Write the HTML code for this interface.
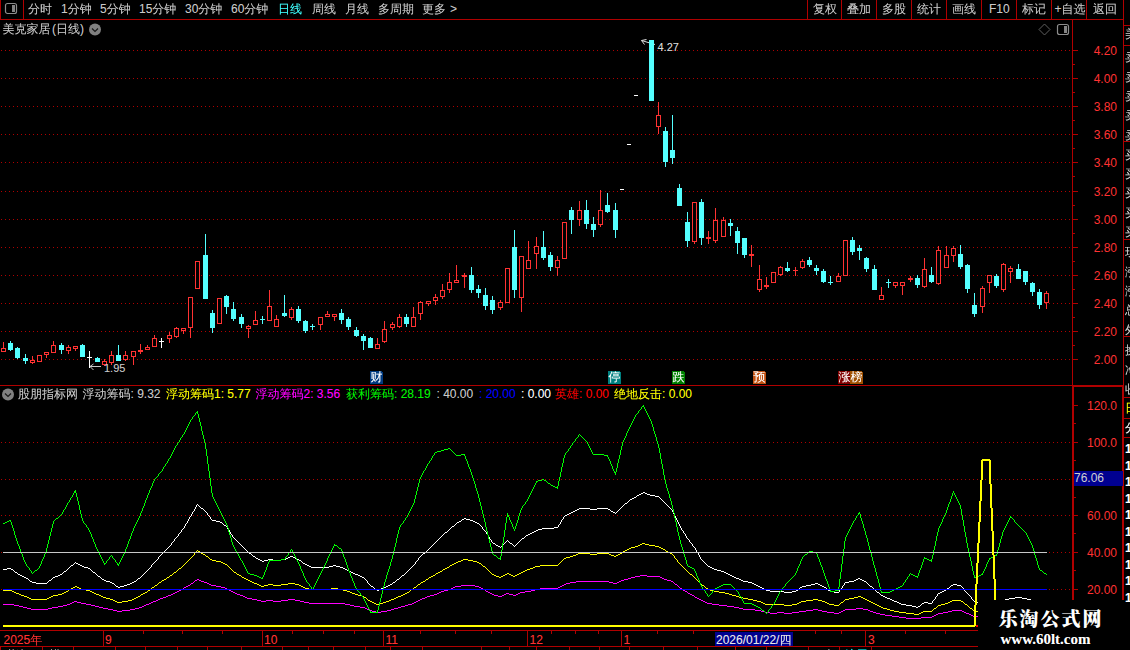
<!DOCTYPE html>
<html><head><meta charset="utf-8"><title>chart</title>
<style>
html,body{margin:0;padding:0;background:#000;overflow:hidden}
body{width:1130px;height:650px;position:relative;font:12px/14px "Liberation Sans","WenQuanYi Zen Hei",sans-serif;color:#c8c8c8}
svg{position:absolute;left:0;top:0}
.t{position:absolute;white-space:nowrap;line-height:14px;height:14px;text-shadow:0 0 0 color-mix(in srgb,currentColor 30%,transparent)}
.r{text-align:right;text-shadow:none}
#wrap{position:absolute;left:0;top:0;width:1130px;height:650px;overflow:hidden}
</style></head><body><div id="wrap">
<svg width="1130" height="650" viewBox="0 0 1130 650" shape-rendering="crispEdges">
<rect x="0" y="0" width="1" height="20" fill="#b00000"/>
<rect x="0" y="19" width="1124" height="1" fill="#b00000"/>
<rect x="23" y="0" width="1" height="20" fill="#b00000"/>
<rect x="807" y="0" width="1" height="20" fill="#b00000"/>
<rect x="841" y="0" width="1" height="20" fill="#b00000"/>
<rect x="876" y="0" width="1" height="20" fill="#b00000"/>
<rect x="911" y="0" width="1" height="20" fill="#b00000"/>
<rect x="946" y="0" width="1" height="20" fill="#b00000"/>
<rect x="981" y="0" width="1" height="20" fill="#b00000"/>
<rect x="1016" y="0" width="1" height="20" fill="#b00000"/>
<rect x="1051" y="0" width="1" height="20" fill="#b00000"/>
<rect x="1086" y="0" width="1" height="20" fill="#b00000"/>
<rect x="1123" y="0" width="1" height="385" fill="#b00000"/>
<rect x="5.5" y="3.5" width="11" height="10" rx="2" ry="2" fill="none" stroke="#8c8c8c" stroke-width="1.2" shape-rendering="auto"/>
<rect x="12" y="5" width="3" height="7" fill="#848484"/>
<line x1="1" y1="50.5" x2="1072" y2="50.5" stroke="#b00000" stroke-width="1" stroke-dasharray="1 3"/>
<line x1="1" y1="78.5" x2="1072" y2="78.5" stroke="#b00000" stroke-width="1" stroke-dasharray="1 3"/>
<line x1="1" y1="106.5" x2="1072" y2="106.5" stroke="#b00000" stroke-width="1" stroke-dasharray="1 3"/>
<line x1="1" y1="134.5" x2="1072" y2="134.5" stroke="#b00000" stroke-width="1" stroke-dasharray="1 3"/>
<line x1="1" y1="162.5" x2="1072" y2="162.5" stroke="#b00000" stroke-width="1" stroke-dasharray="1 3"/>
<line x1="1" y1="191.5" x2="1072" y2="191.5" stroke="#b00000" stroke-width="1" stroke-dasharray="1 3"/>
<line x1="1" y1="219.5" x2="1072" y2="219.5" stroke="#b00000" stroke-width="1" stroke-dasharray="1 3"/>
<line x1="1" y1="247.5" x2="1072" y2="247.5" stroke="#b00000" stroke-width="1" stroke-dasharray="1 3"/>
<line x1="1" y1="275.5" x2="1072" y2="275.5" stroke="#b00000" stroke-width="1" stroke-dasharray="1 3"/>
<line x1="1" y1="303.5" x2="1072" y2="303.5" stroke="#b00000" stroke-width="1" stroke-dasharray="1 3"/>
<line x1="1" y1="331.5" x2="1072" y2="331.5" stroke="#b00000" stroke-width="1" stroke-dasharray="1 3"/>
<line x1="1" y1="359.5" x2="1072" y2="359.5" stroke="#b00000" stroke-width="1" stroke-dasharray="1 3"/>
<rect x="1072" y="20" width="1" height="365" fill="#b00000"/>
<rect x="1073" y="50" width="5" height="1" fill="#b00000"/>
<rect x="1073" y="64" width="2" height="1" fill="#b00000"/>
<rect x="1073" y="78" width="5" height="1" fill="#b00000"/>
<rect x="1073" y="92" width="2" height="1" fill="#b00000"/>
<rect x="1073" y="106" width="5" height="1" fill="#b00000"/>
<rect x="1073" y="120" width="2" height="1" fill="#b00000"/>
<rect x="1073" y="134" width="5" height="1" fill="#b00000"/>
<rect x="1073" y="148" width="2" height="1" fill="#b00000"/>
<rect x="1073" y="162" width="5" height="1" fill="#b00000"/>
<rect x="1073" y="176" width="2" height="1" fill="#b00000"/>
<rect x="1073" y="191" width="5" height="1" fill="#b00000"/>
<rect x="1073" y="205" width="2" height="1" fill="#b00000"/>
<rect x="1073" y="219" width="5" height="1" fill="#b00000"/>
<rect x="1073" y="233" width="2" height="1" fill="#b00000"/>
<rect x="1073" y="247" width="5" height="1" fill="#b00000"/>
<rect x="1073" y="261" width="2" height="1" fill="#b00000"/>
<rect x="1073" y="275" width="5" height="1" fill="#b00000"/>
<rect x="1073" y="289" width="2" height="1" fill="#b00000"/>
<rect x="1073" y="303" width="5" height="1" fill="#b00000"/>
<rect x="1073" y="317" width="2" height="1" fill="#b00000"/>
<rect x="1073" y="331" width="5" height="1" fill="#b00000"/>
<rect x="1073" y="345" width="2" height="1" fill="#b00000"/>
<rect x="1073" y="359" width="5" height="1" fill="#b00000"/>
<path d="M1044.5 24 L1050 29.5 L1044.5 35 L1039 29.5 Z" fill="none" stroke="#606060" stroke-width="1" shape-rendering="auto"/>
<rect x="1057.5" y="24.5" width="11" height="10" rx="2" ry="2" fill="none" stroke="#8c8c8c" stroke-width="1.2" shape-rendering="auto"/>
<rect x="1064" y="26" width="3" height="7" fill="#848484"/>
<rect x="0" y="385" width="1072" height="1" fill="#b00000"/>
<rect x="1072" y="385" width="52" height="2" fill="#b00000"/>
<path d="M89.5 366.5 H101 M90 366.5 l3.5 -2.5 M90 366.5 l3.5 3.5" stroke="#c8c8c8" stroke-width="1" fill="none" shape-rendering="auto"/>
<path d="M641.5 40.5 L655 44.5 M641.5 40.5 l5 -1 M641.5 40.5 l3 4" stroke="#e0e0e0" stroke-width="1" fill="none" shape-rendering="auto"/>
<rect x="3" y="342" width="1" height="6" fill="#ff3232"/>
<rect x="1.5" y="348.5" width="4" height="3" fill="#000" stroke="#ff3232" stroke-width="1"/>
<rect x="10" y="341" width="1" height="10" fill="#54ffff"/>
<rect x="8" y="343" width="5" height="7" fill="#54ffff"/>
<rect x="17" y="347" width="1" height="12" fill="#54ffff"/>
<rect x="15" y="348" width="5" height="10" fill="#54ffff"/>
<rect x="25" y="354" width="1" height="10" fill="#54ffff"/>
<rect x="23" y="358" width="5" height="3" fill="#54ffff"/>
<rect x="32" y="356" width="1" height="4" fill="#ff3232"/>
<rect x="32" y="362" width="1" height="2" fill="#ff3232"/>
<rect x="30.5" y="360.5" width="4" height="2" fill="#000" stroke="#ff3232" stroke-width="1"/>
<rect x="37.5" y="355.5" width="4" height="6" fill="#000" stroke="#ff3232" stroke-width="1"/>
<rect x="46" y="355" width="1" height="3" fill="#ff3232"/>
<rect x="44.5" y="352.5" width="4" height="2" fill="#000" stroke="#ff3232" stroke-width="1"/>
<rect x="53" y="341" width="1" height="4" fill="#ff3232"/>
<rect x="51.5" y="345.5" width="4" height="7" fill="#000" stroke="#ff3232" stroke-width="1"/>
<rect x="61" y="343" width="1" height="11" fill="#54ffff"/>
<rect x="59" y="345" width="5" height="5" fill="#54ffff"/>
<rect x="68" y="345" width="1" height="2" fill="#ff3232"/>
<rect x="68" y="351" width="1" height="3" fill="#ff3232"/>
<rect x="66.5" y="347.5" width="4" height="3" fill="#000" stroke="#ff3232" stroke-width="1"/>
<rect x="75" y="348" width="1" height="3" fill="#ff3232"/>
<rect x="73.5" y="346.5" width="4" height="2" fill="#000" stroke="#ff3232" stroke-width="1"/>
<rect x="82" y="344" width="1" height="13" fill="#54ffff"/>
<rect x="80" y="345" width="5" height="12" fill="#54ffff"/>
<rect x="89" y="351" width="1" height="17" fill="#ffffff"/>
<rect x="87" y="357" width="5" height="1" fill="#ffffff"/>
<rect x="97" y="357" width="1" height="5" fill="#54ffff"/>
<rect x="95" y="358" width="5" height="4" fill="#54ffff"/>
<rect x="104" y="359" width="1" height="2" fill="#ff3232"/>
<rect x="104" y="365" width="1" height="1" fill="#ff3232"/>
<rect x="102.5" y="361.5" width="4" height="3" fill="#000" stroke="#ff3232" stroke-width="1"/>
<rect x="111" y="351" width="1" height="4" fill="#ff3232"/>
<rect x="111" y="363" width="1" height="2" fill="#ff3232"/>
<rect x="109.5" y="355.5" width="4" height="7" fill="#000" stroke="#ff3232" stroke-width="1"/>
<rect x="118" y="345" width="1" height="16" fill="#54ffff"/>
<rect x="116" y="355" width="5" height="6" fill="#54ffff"/>
<rect x="125" y="351" width="1" height="4" fill="#ff3232"/>
<rect x="125" y="360" width="1" height="1" fill="#ff3232"/>
<rect x="123.5" y="355.5" width="4" height="4" fill="#000" stroke="#ff3232" stroke-width="1"/>
<rect x="133" y="357" width="1" height="8" fill="#ff3232"/>
<rect x="131.5" y="351.5" width="4" height="5" fill="#000" stroke="#ff3232" stroke-width="1"/>
<rect x="140" y="344" width="1" height="10" fill="#ff3232"/>
<rect x="138" y="350" width="5" height="2" fill="#ff3232"/>
<rect x="147" y="345" width="1" height="2" fill="#ff3232"/>
<rect x="145.5" y="347.5" width="4" height="2" fill="#000" stroke="#ff3232" stroke-width="1"/>
<rect x="154" y="335" width="1" height="3" fill="#ff3232"/>
<rect x="152.5" y="338.5" width="4" height="8" fill="#000" stroke="#ff3232" stroke-width="1"/>
<rect x="161" y="338" width="1" height="10" fill="#ffffff"/>
<rect x="159" y="341" width="5" height="1" fill="#ffffff"/>
<rect x="169" y="332" width="1" height="3" fill="#ff3232"/>
<rect x="169" y="339" width="1" height="4" fill="#ff3232"/>
<rect x="167.5" y="335.5" width="4" height="3" fill="#000" stroke="#ff3232" stroke-width="1"/>
<rect x="176" y="327" width="1" height="1" fill="#ff3232"/>
<rect x="176" y="337" width="1" height="1" fill="#ff3232"/>
<rect x="174.5" y="328.5" width="4" height="8" fill="#000" stroke="#ff3232" stroke-width="1"/>
<rect x="183" y="330" width="1" height="4" fill="#ff3232"/>
<rect x="181.5" y="328.5" width="4" height="2" fill="#000" stroke="#ff3232" stroke-width="1"/>
<rect x="190" y="328" width="1" height="10" fill="#ff3232"/>
<rect x="188.5" y="297.5" width="4" height="30" fill="#000" stroke="#ff3232" stroke-width="1"/>
<rect x="195.5" y="261.5" width="4" height="27" fill="#000" stroke="#ff3232" stroke-width="1"/>
<rect x="205" y="234" width="1" height="65" fill="#54ffff"/>
<rect x="203" y="255" width="5" height="44" fill="#54ffff"/>
<rect x="212" y="310" width="1" height="23" fill="#54ffff"/>
<rect x="210" y="313" width="5" height="15" fill="#54ffff"/>
<rect x="217.5" y="298.5" width="4" height="25" fill="#000" stroke="#ff3232" stroke-width="1"/>
<rect x="226" y="295" width="1" height="19" fill="#54ffff"/>
<rect x="224" y="296" width="5" height="11" fill="#54ffff"/>
<rect x="233" y="302" width="1" height="19" fill="#54ffff"/>
<rect x="231" y="309" width="5" height="10" fill="#54ffff"/>
<rect x="241" y="314" width="1" height="14" fill="#54ffff"/>
<rect x="239" y="317" width="5" height="7" fill="#54ffff"/>
<rect x="248" y="325" width="1" height="1" fill="#ff3232"/>
<rect x="248" y="329" width="1" height="9" fill="#ff3232"/>
<rect x="246.5" y="326.5" width="4" height="2" fill="#000" stroke="#ff3232" stroke-width="1"/>
<rect x="255" y="311" width="1" height="9" fill="#ff3232"/>
<rect x="253.5" y="320.5" width="4" height="4" fill="#000" stroke="#ff3232" stroke-width="1"/>
<rect x="262" y="316" width="1" height="8" fill="#54ffff"/>
<rect x="260" y="319" width="5" height="1" fill="#54ffff"/>
<rect x="269" y="290" width="1" height="16" fill="#ff3232"/>
<rect x="267.5" y="306.5" width="4" height="14" fill="#000" stroke="#ff3232" stroke-width="1"/>
<rect x="276" y="315" width="1" height="4" fill="#ff3232"/>
<rect x="274.5" y="319.5" width="4" height="7" fill="#000" stroke="#ff3232" stroke-width="1"/>
<rect x="284" y="295" width="1" height="22" fill="#54ffff"/>
<rect x="282" y="313" width="5" height="3" fill="#54ffff"/>
<rect x="291" y="307" width="1" height="2" fill="#ff3232"/>
<rect x="291" y="318" width="1" height="2" fill="#ff3232"/>
<rect x="289.5" y="309.5" width="4" height="8" fill="#000" stroke="#ff3232" stroke-width="1"/>
<rect x="298" y="306" width="1" height="17" fill="#54ffff"/>
<rect x="296" y="309" width="5" height="12" fill="#54ffff"/>
<rect x="305" y="320" width="1" height="13" fill="#54ffff"/>
<rect x="303" y="321" width="5" height="10" fill="#54ffff"/>
<rect x="312" y="324" width="1" height="6" fill="#54ffff"/>
<rect x="310" y="326" width="5" height="1" fill="#54ffff"/>
<rect x="320" y="325" width="1" height="5" fill="#ff3232"/>
<rect x="318.5" y="317.5" width="4" height="7" fill="#000" stroke="#ff3232" stroke-width="1"/>
<rect x="327" y="311" width="1" height="3" fill="#ff3232"/>
<rect x="325.5" y="314.5" width="4" height="2" fill="#000" stroke="#ff3232" stroke-width="1"/>
<rect x="334" y="317" width="1" height="4" fill="#ff3232"/>
<rect x="332.5" y="314.5" width="4" height="2" fill="#000" stroke="#ff3232" stroke-width="1"/>
<rect x="341" y="309" width="1" height="15" fill="#54ffff"/>
<rect x="339" y="313" width="5" height="7" fill="#54ffff"/>
<rect x="348" y="317" width="1" height="13" fill="#54ffff"/>
<rect x="346" y="319" width="5" height="8" fill="#54ffff"/>
<rect x="356" y="327" width="1" height="10" fill="#54ffff"/>
<rect x="354" y="330" width="5" height="6" fill="#54ffff"/>
<rect x="363" y="334" width="1" height="16" fill="#54ffff"/>
<rect x="361" y="336" width="5" height="5" fill="#54ffff"/>
<rect x="370" y="337" width="1" height="11" fill="#54ffff"/>
<rect x="368" y="338" width="5" height="10" fill="#54ffff"/>
<rect x="377" y="338" width="1" height="6" fill="#ff3232"/>
<rect x="375.5" y="344.5" width="4" height="4" fill="#000" stroke="#ff3232" stroke-width="1"/>
<rect x="384" y="321" width="1" height="8" fill="#ff3232"/>
<rect x="384" y="342" width="1" height="1" fill="#ff3232"/>
<rect x="382.5" y="329.5" width="4" height="12" fill="#000" stroke="#ff3232" stroke-width="1"/>
<rect x="392" y="322" width="1" height="2" fill="#ff3232"/>
<rect x="392" y="328" width="1" height="2" fill="#ff3232"/>
<rect x="390.5" y="324.5" width="4" height="3" fill="#000" stroke="#ff3232" stroke-width="1"/>
<rect x="399" y="314" width="1" height="3" fill="#ff3232"/>
<rect x="399" y="327" width="1" height="1" fill="#ff3232"/>
<rect x="397.5" y="317.5" width="4" height="9" fill="#000" stroke="#ff3232" stroke-width="1"/>
<rect x="406" y="314" width="1" height="13" fill="#54ffff"/>
<rect x="404" y="317" width="5" height="7" fill="#54ffff"/>
<rect x="413" y="307" width="1" height="10" fill="#ff3232"/>
<rect x="411.5" y="317.5" width="4" height="9" fill="#000" stroke="#ff3232" stroke-width="1"/>
<rect x="420" y="301" width="1" height="1" fill="#ff3232"/>
<rect x="420" y="314" width="1" height="6" fill="#ff3232"/>
<rect x="418.5" y="302.5" width="4" height="11" fill="#000" stroke="#ff3232" stroke-width="1"/>
<rect x="428" y="303" width="1" height="3" fill="#ff3232"/>
<rect x="426.5" y="301.5" width="4" height="2" fill="#000" stroke="#ff3232" stroke-width="1"/>
<rect x="435" y="294" width="1" height="3" fill="#ff3232"/>
<rect x="435" y="301" width="1" height="4" fill="#ff3232"/>
<rect x="433.5" y="297.5" width="4" height="3" fill="#000" stroke="#ff3232" stroke-width="1"/>
<rect x="442" y="284" width="1" height="6" fill="#ff3232"/>
<rect x="442" y="297" width="1" height="2" fill="#ff3232"/>
<rect x="440.5" y="290.5" width="4" height="6" fill="#000" stroke="#ff3232" stroke-width="1"/>
<rect x="449" y="273" width="1" height="9" fill="#ff3232"/>
<rect x="449" y="290" width="1" height="3" fill="#ff3232"/>
<rect x="447.5" y="282.5" width="4" height="7" fill="#000" stroke="#ff3232" stroke-width="1"/>
<rect x="456" y="265" width="1" height="15" fill="#ff3232"/>
<rect x="454.5" y="280.5" width="4" height="2" fill="#000" stroke="#ff3232" stroke-width="1"/>
<rect x="464" y="273" width="1" height="15" fill="#ff3232"/>
<rect x="462" y="275" width="5" height="2" fill="#ff3232"/>
<rect x="471" y="267" width="1" height="26" fill="#54ffff"/>
<rect x="469" y="275" width="5" height="15" fill="#54ffff"/>
<rect x="478" y="285" width="1" height="13" fill="#54ffff"/>
<rect x="476" y="289" width="5" height="4" fill="#54ffff"/>
<rect x="485" y="288" width="1" height="22" fill="#54ffff"/>
<rect x="483" y="295" width="5" height="11" fill="#54ffff"/>
<rect x="492" y="296" width="1" height="18" fill="#54ffff"/>
<rect x="490" y="300" width="5" height="10" fill="#54ffff"/>
<rect x="500" y="300" width="1" height="2" fill="#ff3232"/>
<rect x="500" y="308" width="1" height="2" fill="#ff3232"/>
<rect x="498.5" y="302.5" width="4" height="5" fill="#000" stroke="#ff3232" stroke-width="1"/>
<rect x="505.5" y="268.5" width="4" height="34" fill="#000" stroke="#ff3232" stroke-width="1"/>
<rect x="514" y="230" width="1" height="68" fill="#54ffff"/>
<rect x="512" y="247" width="5" height="43" fill="#54ffff"/>
<rect x="521" y="298" width="1" height="14" fill="#ff3232"/>
<rect x="519.5" y="256.5" width="4" height="41" fill="#000" stroke="#ff3232" stroke-width="1"/>
<rect x="528" y="241" width="1" height="19" fill="#ff3232"/>
<rect x="526.5" y="260.5" width="4" height="8" fill="#000" stroke="#ff3232" stroke-width="1"/>
<rect x="536" y="237" width="1" height="9" fill="#ff3232"/>
<rect x="536" y="254" width="1" height="15" fill="#ff3232"/>
<rect x="534.5" y="246.5" width="4" height="7" fill="#000" stroke="#ff3232" stroke-width="1"/>
<rect x="543" y="231" width="1" height="29" fill="#54ffff"/>
<rect x="541" y="247" width="5" height="11" fill="#54ffff"/>
<rect x="550" y="252" width="1" height="19" fill="#54ffff"/>
<rect x="548" y="255" width="5" height="12" fill="#54ffff"/>
<rect x="557" y="256" width="1" height="4" fill="#ff3232"/>
<rect x="557" y="268" width="1" height="8" fill="#ff3232"/>
<rect x="555.5" y="260.5" width="4" height="7" fill="#000" stroke="#ff3232" stroke-width="1"/>
<rect x="562.5" y="222.5" width="4" height="36" fill="#000" stroke="#ff3232" stroke-width="1"/>
<rect x="571" y="207" width="1" height="27" fill="#54ffff"/>
<rect x="569" y="210" width="5" height="10" fill="#54ffff"/>
<rect x="579" y="201" width="1" height="9" fill="#ff3232"/>
<rect x="579" y="220" width="1" height="6" fill="#ff3232"/>
<rect x="577.5" y="210.5" width="4" height="9" fill="#000" stroke="#ff3232" stroke-width="1"/>
<rect x="586" y="200" width="1" height="29" fill="#54ffff"/>
<rect x="584" y="210" width="5" height="14" fill="#54ffff"/>
<rect x="593" y="217" width="1" height="20" fill="#54ffff"/>
<rect x="591" y="224" width="5" height="6" fill="#54ffff"/>
<rect x="600" y="190" width="1" height="20" fill="#ff3232"/>
<rect x="600" y="225" width="1" height="2" fill="#ff3232"/>
<rect x="598.5" y="210.5" width="4" height="14" fill="#000" stroke="#ff3232" stroke-width="1"/>
<rect x="607" y="193" width="1" height="20" fill="#54ffff"/>
<rect x="605" y="205" width="5" height="7" fill="#54ffff"/>
<rect x="615" y="203" width="1" height="35" fill="#54ffff"/>
<rect x="613" y="210" width="5" height="20" fill="#54ffff"/>
<rect x="620" y="189" width="4" height="1" fill="#ffffff"/>
<rect x="627" y="144" width="4" height="1" fill="#ffffff"/>
<rect x="634" y="95" width="4" height="1" fill="#ffffff"/>
<rect x="651" y="40" width="1" height="61" fill="#54ffff"/>
<rect x="649" y="40" width="5" height="61" fill="#54ffff"/>
<rect x="658" y="102" width="1" height="13" fill="#ff3232"/>
<rect x="658" y="127" width="1" height="7" fill="#ff3232"/>
<rect x="656.5" y="115.5" width="4" height="11" fill="#000" stroke="#ff3232" stroke-width="1"/>
<rect x="665" y="127" width="1" height="40" fill="#54ffff"/>
<rect x="663" y="131" width="5" height="31" fill="#54ffff"/>
<rect x="672" y="115" width="1" height="49" fill="#54ffff"/>
<rect x="670" y="150" width="5" height="8" fill="#54ffff"/>
<rect x="679" y="184" width="1" height="22" fill="#54ffff"/>
<rect x="677" y="188" width="5" height="18" fill="#54ffff"/>
<rect x="687" y="212" width="1" height="35" fill="#54ffff"/>
<rect x="685" y="222" width="5" height="19" fill="#54ffff"/>
<rect x="694" y="242" width="1" height="2" fill="#ff3232"/>
<rect x="692.5" y="202.5" width="4" height="39" fill="#000" stroke="#ff3232" stroke-width="1"/>
<rect x="701" y="199" width="1" height="46" fill="#54ffff"/>
<rect x="699" y="202" width="5" height="36" fill="#54ffff"/>
<rect x="708" y="231" width="1" height="13" fill="#ff3232"/>
<rect x="706" y="237" width="5" height="2" fill="#ff3232"/>
<rect x="715" y="208" width="1" height="12" fill="#ff3232"/>
<rect x="715" y="241" width="1" height="2" fill="#ff3232"/>
<rect x="713.5" y="220.5" width="4" height="20" fill="#000" stroke="#ff3232" stroke-width="1"/>
<rect x="723" y="217" width="1" height="3" fill="#ff3232"/>
<rect x="721.5" y="220.5" width="4" height="16" fill="#000" stroke="#ff3232" stroke-width="1"/>
<rect x="730" y="219" width="1" height="17" fill="#54ffff"/>
<rect x="728" y="223" width="5" height="3" fill="#54ffff"/>
<rect x="737" y="227" width="1" height="27" fill="#54ffff"/>
<rect x="735" y="231" width="5" height="12" fill="#54ffff"/>
<rect x="744" y="238" width="1" height="20" fill="#54ffff"/>
<rect x="742" y="238" width="5" height="17" fill="#54ffff"/>
<rect x="751" y="245" width="1" height="22" fill="#ff3232"/>
<rect x="749" y="254" width="5" height="2" fill="#ff3232"/>
<rect x="759" y="265" width="1" height="14" fill="#ff3232"/>
<rect x="759" y="290" width="1" height="2" fill="#ff3232"/>
<rect x="757.5" y="279.5" width="4" height="10" fill="#000" stroke="#ff3232" stroke-width="1"/>
<rect x="766" y="277" width="1" height="12" fill="#ff3232"/>
<rect x="764" y="285" width="5" height="2" fill="#ff3232"/>
<rect x="771.5" y="272.5" width="4" height="10" fill="#000" stroke="#ff3232" stroke-width="1"/>
<rect x="780" y="266" width="1" height="1" fill="#ff3232"/>
<rect x="780" y="275" width="1" height="1" fill="#ff3232"/>
<rect x="778.5" y="267.5" width="4" height="7" fill="#000" stroke="#ff3232" stroke-width="1"/>
<rect x="787" y="262" width="1" height="10" fill="#54ffff"/>
<rect x="785" y="268" width="5" height="3" fill="#54ffff"/>
<rect x="795" y="267" width="1" height="3" fill="#ff3232"/>
<rect x="795" y="271" width="1" height="5" fill="#ff3232"/>
<rect x="793" y="270" width="5" height="1" fill="#ff3232"/>
<rect x="802" y="259" width="1" height="2" fill="#ff3232"/>
<rect x="802" y="268" width="1" height="1" fill="#ff3232"/>
<rect x="800.5" y="261.5" width="4" height="6" fill="#000" stroke="#ff3232" stroke-width="1"/>
<rect x="809" y="257" width="1" height="10" fill="#54ffff"/>
<rect x="807" y="260" width="5" height="5" fill="#54ffff"/>
<rect x="816" y="265" width="1" height="10" fill="#54ffff"/>
<rect x="814" y="268" width="5" height="3" fill="#54ffff"/>
<rect x="823" y="269" width="1" height="14" fill="#54ffff"/>
<rect x="821" y="271" width="5" height="11" fill="#54ffff"/>
<rect x="830" y="276" width="1" height="9" fill="#54ffff"/>
<rect x="828" y="282" width="5" height="1" fill="#54ffff"/>
<rect x="838" y="273" width="1" height="3" fill="#ff3232"/>
<rect x="836.5" y="276.5" width="4" height="5" fill="#000" stroke="#ff3232" stroke-width="1"/>
<rect x="843.5" y="240.5" width="4" height="35" fill="#000" stroke="#ff3232" stroke-width="1"/>
<rect x="852" y="237" width="1" height="18" fill="#54ffff"/>
<rect x="850" y="240" width="5" height="12" fill="#54ffff"/>
<rect x="859" y="245" width="1" height="15" fill="#54ffff"/>
<rect x="857" y="248" width="5" height="3" fill="#54ffff"/>
<rect x="866" y="257" width="1" height="15" fill="#54ffff"/>
<rect x="864" y="258" width="5" height="11" fill="#54ffff"/>
<rect x="874" y="265" width="1" height="25" fill="#54ffff"/>
<rect x="872" y="269" width="5" height="21" fill="#54ffff"/>
<rect x="881" y="287" width="1" height="8" fill="#ff3232"/>
<rect x="879.5" y="295.5" width="4" height="4" fill="#000" stroke="#ff3232" stroke-width="1"/>
<rect x="888" y="279" width="1" height="9" fill="#54ffff"/>
<rect x="886" y="282" width="5" height="1" fill="#54ffff"/>
<rect x="895" y="286" width="1" height="2" fill="#ff3232"/>
<rect x="893.5" y="282.5" width="4" height="3" fill="#000" stroke="#ff3232" stroke-width="1"/>
<rect x="902" y="286" width="1" height="9" fill="#ff3232"/>
<rect x="900.5" y="282.5" width="4" height="3" fill="#000" stroke="#ff3232" stroke-width="1"/>
<rect x="910" y="276" width="1" height="6" fill="#ff3232"/>
<rect x="908" y="278" width="5" height="2" fill="#ff3232"/>
<rect x="917" y="275" width="1" height="13" fill="#54ffff"/>
<rect x="915" y="278" width="5" height="7" fill="#54ffff"/>
<rect x="924" y="258" width="1" height="11" fill="#ff3232"/>
<rect x="924" y="287" width="1" height="1" fill="#ff3232"/>
<rect x="922.5" y="269.5" width="4" height="17" fill="#000" stroke="#ff3232" stroke-width="1"/>
<rect x="931" y="267" width="1" height="16" fill="#54ffff"/>
<rect x="929" y="275" width="5" height="7" fill="#54ffff"/>
<rect x="938" y="246" width="1" height="4" fill="#ff3232"/>
<rect x="938" y="284" width="1" height="1" fill="#ff3232"/>
<rect x="936.5" y="250.5" width="4" height="33" fill="#000" stroke="#ff3232" stroke-width="1"/>
<rect x="946" y="246" width="1" height="9" fill="#ff3232"/>
<rect x="944.5" y="255.5" width="4" height="12" fill="#000" stroke="#ff3232" stroke-width="1"/>
<rect x="953" y="246" width="1" height="2" fill="#ff3232"/>
<rect x="953" y="256" width="1" height="6" fill="#ff3232"/>
<rect x="951.5" y="248.5" width="4" height="7" fill="#000" stroke="#ff3232" stroke-width="1"/>
<rect x="960" y="245" width="1" height="24" fill="#54ffff"/>
<rect x="958" y="254" width="5" height="13" fill="#54ffff"/>
<rect x="967" y="264" width="1" height="29" fill="#54ffff"/>
<rect x="965" y="265" width="5" height="24" fill="#54ffff"/>
<rect x="974" y="293" width="1" height="24" fill="#54ffff"/>
<rect x="972" y="305" width="5" height="9" fill="#54ffff"/>
<rect x="982" y="286" width="1" height="2" fill="#ff3232"/>
<rect x="982" y="307" width="1" height="6" fill="#ff3232"/>
<rect x="980.5" y="288.5" width="4" height="18" fill="#000" stroke="#ff3232" stroke-width="1"/>
<rect x="989" y="283" width="1" height="10" fill="#ff3232"/>
<rect x="987.5" y="275.5" width="4" height="7" fill="#000" stroke="#ff3232" stroke-width="1"/>
<rect x="996" y="274" width="1" height="14" fill="#54ffff"/>
<rect x="994" y="276" width="5" height="10" fill="#54ffff"/>
<rect x="1003" y="263" width="1" height="1" fill="#ff3232"/>
<rect x="1003" y="290" width="1" height="2" fill="#ff3232"/>
<rect x="1001.5" y="264.5" width="4" height="25" fill="#000" stroke="#ff3232" stroke-width="1"/>
<rect x="1010" y="266" width="1" height="2" fill="#ff3232"/>
<rect x="1010" y="272" width="1" height="11" fill="#ff3232"/>
<rect x="1008.5" y="268.5" width="4" height="3" fill="#000" stroke="#ff3232" stroke-width="1"/>
<rect x="1018" y="264" width="1" height="15" fill="#54ffff"/>
<rect x="1016" y="269" width="5" height="10" fill="#54ffff"/>
<rect x="1025" y="271" width="1" height="14" fill="#54ffff"/>
<rect x="1023" y="271" width="5" height="11" fill="#54ffff"/>
<rect x="1032" y="282" width="1" height="14" fill="#54ffff"/>
<rect x="1030" y="283" width="5" height="9" fill="#54ffff"/>
<rect x="1039" y="289" width="1" height="20" fill="#54ffff"/>
<rect x="1037" y="292" width="5" height="13" fill="#54ffff"/>
<rect x="1046" y="291" width="1" height="2" fill="#ff3232"/>
<rect x="1046" y="303" width="1" height="6" fill="#ff3232"/>
<rect x="1044.5" y="293.5" width="4" height="9" fill="#000" stroke="#ff3232" stroke-width="1"/>
<path d="M370 371 H381 L383 373 V384 H370 Z" fill="#003a80"/>
<path d="M608 371 H619 L621 373 V384 H608 Z" fill="#008080"/>
<path d="M672 371 H683 L685 373 V384 H672 Z" fill="#008000"/>
<path d="M753 371 H764 L766 373 V384 H753 Z" fill="#c05010"/>
<rect x="838" y="371" width="12" height="13" fill="#800000"/>
<path d="M850 371 H861 L863 373 V384 H850 Z" fill="#a05000"/>
<line x1="1" y1="442.5" x2="1072" y2="442.5" stroke="#b00000" stroke-width="1" stroke-dasharray="1 3"/>
<line x1="1" y1="479.5" x2="1072" y2="479.5" stroke="#b00000" stroke-width="1" stroke-dasharray="1 3"/>
<line x1="1" y1="515.5" x2="1072" y2="515.5" stroke="#b00000" stroke-width="1" stroke-dasharray="1 3"/>
<line x1="1" y1="552.5" x2="1072" y2="552.5" stroke="#b00000" stroke-width="1" stroke-dasharray="1 3"/>
<line x1="1" y1="589.5" x2="1072" y2="589.5" stroke="#b00000" stroke-width="1" stroke-dasharray="1 3"/>
<rect x="1072" y="385" width="2" height="215" fill="#b00000"/>
<rect x="1122" y="385" width="2" height="215" fill="#b00000"/>
<rect x="1074" y="405" width="4" height="1" fill="#b00000"/>
<rect x="1074" y="423" width="2" height="1" fill="#b00000"/>
<rect x="1074" y="442" width="4" height="1" fill="#b00000"/>
<rect x="1074" y="460" width="2" height="1" fill="#b00000"/>
<rect x="1074" y="479" width="4" height="1" fill="#b00000"/>
<rect x="1074" y="497" width="2" height="1" fill="#b00000"/>
<rect x="1074" y="515" width="4" height="1" fill="#b00000"/>
<rect x="1074" y="533" width="2" height="1" fill="#b00000"/>
<rect x="1074" y="552" width="4" height="1" fill="#b00000"/>
<rect x="1074" y="570" width="2" height="1" fill="#b00000"/>
<rect x="1074" y="589" width="4" height="1" fill="#b00000"/>
<rect x="1074" y="471" width="49" height="15" fill="#000090"/>
<path d="M643 492h2M641 493h2M645 493h2M639 494h2M647 494h3M637 495h2M650 495h5M636 496h1M655 496h4M634 497h2M659 497h1M632 498h2M660 498h1M630 499h2M661 499h1M629 500h1M662 500h1M628 501h1M663 501h1M627 502h1M664 502h1M625 503h2M665 503h1M197 504h1M624 504h1M666 504h1M198 505h1M623 505h1M667 505h1M199 506h1M622 506h1M668 506h1M200 507h1M621 507h1M669 507h1M201 508h2M579 508h11M597 508h11M620 508h1M670 508h1M203 509h1M577 509h2M590 509h7M608 509h2M619 509h1M671 509h1M204 510h1M575 510h2M610 510h1M618 510h1M193 511h1M205 511h1M573 511h2M611 511h2M617 511h1M206 512h1M571 512h2M613 512h2M616 512h1M569 513h2M615 513h1M567 514h2M208 515h1M565 515h2M190 516h1M209 516h1M564 516h1M464 518h2M211 519h1M462 519h2M466 519h4M562 519h1M212 520h4M461 520h1M470 520h3M216 521h4M459 521h2M473 521h2M220 522h2M457 522h2M475 522h2M186 523h1M222 523h1M456 523h1M477 523h2M223 524h1M455 524h1M479 524h1M559 524h1M224 525h2M454 525h1M480 525h1M226 526h1M452 526h2M481 526h1M451 527h1M554 527h4M183 528h1M450 528h1M542 528h12M182 529h1M228 529h1M449 529h1M483 529h1M538 529h4M448 530h1M484 530h1M536 530h2M682 530h1M447 531h1M485 531h1M534 531h2M180 532h1M445 532h2M532 532h2M179 533h1M444 533h1M530 533h2M684 533h1M231 534h1M443 534h1M487 534h1M528 534h2M442 535h1M526 535h2M177 536h1M441 536h1M525 536h1M176 537h1M233 537h1M440 537h1M524 537h1M175 538h1M234 538h1M439 538h1M522 538h2M687 538h1M235 539h1M438 539h1M490 539h1M521 539h1M688 539h1M236 540h1M437 540h1M507 540h1M520 540h1M173 541h1M237 541h1M436 541h1M506 541h1M508 541h1M519 541h1M172 542h1M238 542h1M435 542h1M492 542h1M505 542h1M509 542h1M518 542h1M690 542h1M239 543h1M434 543h1M493 543h2M504 543h1M510 543h2M517 543h1M691 543h1M240 544h1M433 544h1M495 544h1M503 544h1M512 544h1M516 544h1M170 545h1M241 545h1M432 545h1M496 545h2M502 545h1M513 545h1M515 545h1M169 546h1M242 546h1M431 546h1M498 546h2M501 546h1M514 546h1M693 546h1M168 547h1M243 547h1M430 547h1M500 547h1M694 547h1M167 548h1M244 548h1M429 548h1M166 549h1M245 549h1M428 549h1M165 550h1M246 550h1M427 550h1M164 551h1M247 551h1M426 551h1M163 552h1M248 552h1M425 552h1M697 552h1M162 553h1M249 553h2M423 553h2M161 554h1M251 554h1M422 554h1M160 555h1M252 555h1M421 555h1M159 556h1M253 556h2M290 556h3M420 556h1M255 557h1M288 557h2M293 557h2M419 557h1M256 558h2M286 558h2M295 558h2M157 559h1M258 559h2M268 559h5M281 559h5M297 559h2M701 559h1M156 560h1M260 560h2M264 560h4M273 560h8M299 560h2M417 560h1M702 560h1M155 561h1M262 561h2M301 561h1M416 561h1M703 561h1M75 562h1M154 562h1M302 562h1M704 562h1M74 563h1M76 563h2M153 563h1M303 563h2M705 563h1M73 564h1M78 564h2M152 564h1M305 564h2M414 564h1M706 564h1M71 565h2M80 565h2M307 565h2M333 565h3M413 565h1M707 565h1M70 566h1M82 566h2M309 566h2M329 566h4M336 566h4M412 566h1M708 566h2M69 567h1M84 567h4M150 567h1M311 567h18M340 567h3M411 567h1M710 567h2M7 568h4M68 568h1M88 568h2M149 568h1M343 568h2M410 568h1M712 568h2M3 569h4M11 569h2M67 569h1M90 569h1M148 569h1M345 569h2M409 569h1M714 569h3M13 570h1M66 570h1M91 570h1M147 570h1M347 570h2M408 570h1M717 570h4M14 571h1M64 571h2M92 571h1M146 571h1M349 571h2M407 571h1M721 571h3M15 572h2M63 572h1M93 572h2M145 572h1M351 572h2M406 572h1M724 572h2M17 573h1M62 573h1M95 573h1M144 573h1M353 573h2M405 573h1M726 573h2M18 574h2M60 574h2M96 574h1M143 574h1M355 574h3M404 574h1M728 574h2M20 575h2M58 575h2M97 575h1M142 575h1M358 575h2M402 575h2M730 575h2M22 576h2M55 576h3M98 576h2M141 576h1M360 576h2M401 576h1M732 576h2M24 577h2M53 577h2M100 577h1M140 577h1M362 577h2M400 577h1M734 577h2M26 578h2M52 578h1M101 578h1M138 578h2M364 578h1M399 578h1M736 578h3M858 578h2M28 579h1M51 579h1M102 579h2M137 579h1M365 579h1M397 579h2M739 579h2M856 579h2M860 579h2M29 580h1M49 580h2M104 580h2M136 580h1M366 580h1M396 580h1M741 580h2M854 580h2M862 580h2M30 581h2M48 581h1M106 581h4M134 581h2M395 581h1M743 581h5M849 581h5M864 581h2M32 582h4M47 582h1M110 582h2M132 582h2M393 582h2M748 582h4M845 582h4M866 582h1M36 583h11M112 583h2M130 583h2M368 583h1M392 583h1M752 583h2M815 583h3M867 583h1M114 584h1M127 584h3M369 584h1M390 584h2M754 584h2M811 584h4M818 584h2M868 584h1M953 584h4M115 585h1M124 585h3M370 585h1M388 585h2M756 585h2M806 585h5M820 585h2M843 585h1M869 585h1M951 585h2M957 585h4M116 586h2M120 586h4M371 586h2M386 586h2M758 586h2M802 586h4M822 586h2M870 586h2M950 586h1M961 586h1M118 587h2M373 587h1M383 587h3M760 587h2M800 587h2M824 587h2M872 587h1M949 587h1M962 587h1M374 588h1M381 588h2M762 588h2M799 588h1M826 588h1M841 588h1M873 588h1M947 588h2M963 588h1M375 589h2M379 589h2M764 589h2M798 589h1M827 589h1M840 589h1M874 589h1M946 589h1M377 590h2M766 590h4M796 590h2M828 590h2M875 590h1M944 590h2M770 591h14M792 591h4M830 591h4M876 591h1M942 591h2M965 591h1M784 592h8M834 592h5M877 592h2M940 592h2M966 592h1M879 593h1M938 593h2M967 593h1M880 594h1M968 594h1M881 595h2M969 595h1M883 596h2M936 596h1M970 596h1M885 597h2M1015 597h7M887 598h3M1009 598h6M1022 598h5M890 599h2M934 599h1M972 599h1M1005 599h4M1027 599h4M892 600h2M933 600h1M973 600h1M1002 600h3M1031 600h2M894 601h3M974 601h2M1000 601h2M1033 601h2M897 602h2M924 602h4M976 602h4M998 602h2M1035 602h1M899 603h2M922 603h2M928 603h4M980 603h18M1036 603h1M901 604h5M921 604h1M1037 604h2M906 605h6M920 605h1M1039 605h1M912 606h4M918 606h2M1040 606h2M916 607h2M1042 607h2M1044 608h2M1046 609h1" transform="translate(0 .5)" stroke="#ffffff" stroke-width="1" fill="none"/>
<path d="M151 565v2M158 557v2M171 543v2M174 539v2M178 534v2M181 530v2M184 526v2M185 524v2M187 521v2M188 519v2M189 517v2M191 514v2M192 512v2M194 509v2M195 507v2M196 505v2M207 513v2M210 517v2M227 527v2M229 530v2M230 532v2M232 535v2M367 581v2M415 562v2M418 558v2M482 527v2M486 532v2M488 535v2M489 537v2M491 540v2M558 525v2M560 522v2M561 520v2M563 517v2M672 510v2M673 512v2M674 514v2M675 516v2M676 518v2M677 520v2M678 522v2M679 524v2M680 526v2M681 528v2M683 531v2M685 534v2M686 536v2M689 540v2M692 544v2M695 548v2M696 550v2M698 553v2M699 555v2M700 557v2M839 590v2M842 586v2M844 583v2M932 601v2M935 597v2M937 594v2M964 589v2M971 597v2" transform="translate(.5 0)" stroke="#ffffff" stroke-width="1" fill="none"/>
<path d="M642 543h3M640 544h2M645 544h4M638 545h2M649 545h6M635 546h3M655 546h4M631 547h4M659 547h2M629 548h2M661 548h2M627 549h2M663 549h2M197 550h1M625 550h2M665 550h1M196 551h1M198 551h2M623 551h2M666 551h2M195 552h1M200 552h1M622 552h1M668 552h2M201 553h2M578 553h12M597 553h12M620 553h2M670 553h2M203 554h2M576 554h2M590 554h7M609 554h2M618 554h2M672 554h1M193 555h1M205 555h1M573 555h3M611 555h3M616 555h2M673 555h1M192 556h1M206 556h2M570 556h3M614 556h2M191 557h1M208 557h1M566 557h4M190 558h1M209 558h1M564 558h2M675 558h1M189 559h1M210 559h2M463 559h5M563 559h1M676 559h1M188 560h1M212 560h4M461 560h2M468 560h5M562 560h1M187 561h1M216 561h5M458 561h3M473 561h4M561 561h1M186 562h1M221 562h2M456 562h2M477 562h2M560 562h1M678 562h1M185 563h1M223 563h2M454 563h2M479 563h2M559 563h1M679 563h1M184 564h1M225 564h2M452 564h2M481 564h1M558 564h1M680 564h1M183 565h1M227 565h1M450 565h2M482 565h1M540 565h18M681 565h1M182 566h1M228 566h1M449 566h1M483 566h2M535 566h5M682 566h1M181 567h1M229 567h1M447 567h2M485 567h1M533 567h2M683 567h1M179 568h2M230 568h1M445 568h2M486 568h1M530 568h3M684 568h1M178 569h1M231 569h1M443 569h2M487 569h1M527 569h3M685 569h1M177 570h1M232 570h1M442 570h1M488 570h1M525 570h2M686 570h1M176 571h1M233 571h1M440 571h2M489 571h1M523 571h2M687 571h1M174 572h2M234 572h2M438 572h2M490 572h1M521 572h2M688 572h1M173 573h1M236 573h1M436 573h2M491 573h1M507 573h2M519 573h2M689 573h1M172 574h1M237 574h2M435 574h1M492 574h2M505 574h2M509 574h2M517 574h2M690 574h2M170 575h2M239 575h2M433 575h2M494 575h2M503 575h2M511 575h2M515 575h2M692 575h1M169 576h1M241 576h1M431 576h2M496 576h3M501 576h2M513 576h2M693 576h1M167 577h2M242 577h2M429 577h2M499 577h2M694 577h1M166 578h1M244 578h2M428 578h1M695 578h1M164 579h2M246 579h2M426 579h2M696 579h1M162 580h2M248 580h2M425 580h1M697 580h1M161 581h1M250 581h2M423 581h2M698 581h1M159 582h2M252 582h2M421 582h2M699 582h1M158 583h1M254 583h3M288 583h7M420 583h1M700 583h1M157 584h1M257 584h2M268 584h5M281 584h7M295 584h4M418 584h2M701 584h1M155 585h2M259 585h2M264 585h4M273 585h8M299 585h2M417 585h1M702 585h2M75 586h2M154 586h1M261 586h3M301 586h2M416 586h1M704 586h1M73 587h2M77 587h2M152 587h2M303 587h2M414 587h2M705 587h1M71 588h2M79 588h2M151 588h1M305 588h4M331 588h7M413 588h1M706 588h2M69 589h2M81 589h5M150 589h1M309 589h22M338 589h5M411 589h2M708 589h2M3 590h9M68 590h1M86 590h4M148 590h2M343 590h4M410 590h1M710 590h4M12 591h2M66 591h2M90 591h2M147 591h1M347 591h3M409 591h1M714 591h5M14 592h2M64 592h2M92 592h2M145 592h2M350 592h2M407 592h2M719 592h6M16 593h3M62 593h2M94 593h2M143 593h2M352 593h3M405 593h2M725 593h4M19 594h2M58 594h4M96 594h3M141 594h2M355 594h3M403 594h2M729 594h3M21 595h3M53 595h5M99 595h2M140 595h1M358 595h4M401 595h2M732 595h4M24 596h3M51 596h2M101 596h2M138 596h2M362 596h2M398 596h3M736 596h3M858 596h3M27 597h2M49 597h2M103 597h3M136 597h2M364 597h2M396 597h2M739 597h4M854 597h4M861 597h2M29 598h2M47 598h2M106 598h4M134 598h2M366 598h1M394 598h2M743 598h5M849 598h5M863 598h2M31 599h16M110 599h3M132 599h2M367 599h1M391 599h3M748 599h5M813 599h5M845 599h4M865 599h2M113 600h2M128 600h4M368 600h2M389 600h2M753 600h4M806 600h7M818 600h4M844 600h1M867 600h2M952 600h9M115 601h2M122 601h6M370 601h2M386 601h3M757 601h4M801 601h5M822 601h3M843 601h1M869 601h2M950 601h2M961 601h2M117 602h5M372 602h2M383 602h3M761 602h2M799 602h2M825 602h2M841 602h2M871 602h2M948 602h2M963 602h1M374 603h2M379 603h4M763 603h2M797 603h2M827 603h2M840 603h1M873 603h2M945 603h3M964 603h1M376 604h3M765 604h19M792 604h5M829 604h5M839 604h1M875 604h2M941 604h4M965 604h2M784 605h8M834 605h5M877 605h2M938 605h3M967 605h1M879 606h2M937 606h1M968 606h1M881 607h2M936 607h1M969 607h1M883 608h4M934 608h2M970 608h2M1009 608h18M887 609h3M933 609h1M972 609h1M1005 609h4M1027 609h4M890 610h4M932 610h1M973 610h1M1000 610h5M1031 610h3M894 611h5M923 611h9M974 611h26M1034 611h2M899 612h7M921 612h2M1036 612h2M906 613h8M919 613h2M1038 613h3M914 614h5M1041 614h4M1045 615h2" transform="translate(0 .5)" stroke="#ffff00" stroke-width="1" fill="none"/>
<path d="M194 553v2M674 556v2M677 560v2" transform="translate(.5 0)" stroke="#ffff00" stroke-width="1" fill="none"/>
<path d="M640 575h7M635 576h5M647 576h13M631 577h4M660 577h2M628 578h3M662 578h2M197 579h2M624 579h4M664 579h3M195 580h2M199 580h2M621 580h3M667 580h4M194 581h1M201 581h3M576 581h33M619 581h2M671 581h2M193 582h1M204 582h3M570 582h6M609 582h4M617 582h2M673 582h1M191 583h2M207 583h2M566 583h4M613 583h4M674 583h1M190 584h1M209 584h2M564 584h2M675 584h2M188 585h2M211 585h5M461 585h14M562 585h2M677 585h1M186 586h2M216 586h5M455 586h6M475 586h4M560 586h2M678 586h1M184 587h2M221 587h4M453 587h2M479 587h2M558 587h2M679 587h1M183 588h1M225 588h2M451 588h2M481 588h2M540 588h18M680 588h2M181 589h2M227 589h2M448 589h3M483 589h2M535 589h5M682 589h1M179 590h2M229 590h2M444 590h4M485 590h1M531 590h4M683 590h2M177 591h2M231 591h2M441 591h3M486 591h2M525 591h6M685 591h2M175 592h2M233 592h2M439 592h2M488 592h2M520 592h5M687 592h1M173 593h2M235 593h2M437 593h2M490 593h2M506 593h3M518 593h2M688 593h2M171 594h2M237 594h3M434 594h3M492 594h2M504 594h2M509 594h4M516 594h2M690 594h2M168 595h3M240 595h3M430 595h4M494 595h4M502 595h2M513 595h3M692 595h2M166 596h2M243 596h2M427 596h3M498 596h4M694 596h1M163 597h3M245 597h2M425 597h2M695 597h2M160 598h3M247 598h5M422 598h3M697 598h2M158 599h2M252 599h5M288 599h7M420 599h2M699 599h2M156 600h2M257 600h4M266 600h7M281 600h7M295 600h5M418 600h2M701 600h2M74 601h3M153 601h3M261 601h5M273 601h8M300 601h4M416 601h2M703 601h2M72 602h2M77 602h4M151 602h2M304 602h5M414 602h2M705 602h2M70 603h2M81 603h5M149 603h2M309 603h36M412 603h2M707 603h5M3 604h11M67 604h3M86 604h5M146 604h3M345 604h5M408 604h4M712 604h7M14 605h5M63 605h4M91 605h4M144 605h2M350 605h4M405 605h3M719 605h8M19 606h4M58 606h5M95 606h4M142 606h2M354 606h6M401 606h4M727 606h7M23 607h4M52 607h6M99 607h4M139 607h3M360 607h5M398 607h3M734 607h5M27 608h4M48 608h4M103 608h5M135 608h4M365 608h2M394 608h4M739 608h4M856 608h7M31 609h17M108 609h5M130 609h5M367 609h2M391 609h3M743 609h12M813 609h5M845 609h11M863 609h5M113 610h4M122 610h8M369 610h3M387 610h4M755 610h6M806 610h7M818 610h4M843 610h2M868 610h2M952 610h10M117 611h5M372 611h4M381 611h6M761 611h4M799 611h7M822 611h5M841 611h2M870 611h3M948 611h4M962 611h2M376 612h5M765 612h5M777 612h7M792 612h7M827 612h7M839 612h2M873 612h3M943 612h5M964 612h2M770 613h7M784 613h8M834 613h5M876 613h4M938 613h5M966 613h3M880 614h5M936 614h2M969 614h2M885 615h7M934 615h2M971 615h2M1007 615h22M892 616h7M932 616h2M973 616h5M1000 616h7M1029 616h5M899 617h7M921 617h11M978 617h22M1034 617h4M906 618h15M1038 618h5M1043 619h4" transform="translate(0 .5)" stroke="#ff00ff" stroke-width="1" fill="none"/>
<path d="M642 406h1M640 409h1M639 410h1M196 412h1M637 413h1M636 414h1M194 415h1M193 416h1M191 419h1M183 434h1M579 434h1M580 435h1M581 436h1M181 437h1M577 437h1M582 437h1M576 438h1M583 438h1M584 439h1M585 440h1M574 441h1M586 441h1M178 442h1M573 442h1M176 445h1M571 445h1M448 448h2M569 448h1M444 449h4M450 449h1M441 450h3M451 450h1M437 451h4M452 451h1M567 451h1M435 452h2M453 452h1M566 452h1M454 453h1M455 454h1M461 454h3M593 454h11M433 455h1M456 455h5M604 455h3M169 458h1M430 460h1M166 463h1M428 463h1M164 466h1M424 470h1M161 471h1M160 472h1M159 473h1M157 476h1M156 477h1M155 478h1M542 479h2M538 480h4M544 480h2M537 481h1M546 481h1M547 482h1M548 483h2M550 484h1M551 485h2M553 486h2M555 487h2M71 497h1M526 501h1M68 502h1M524 504h1M523 505h1M64 509h1M61 514h1M60 515h1M857 515h1M59 516h1M58 517h1M406 517h1M1011 517h1M56 518h2M1012 518h1M55 519h1M1013 519h1M9 520h1M54 520h1M404 520h1M854 520h1M7 521h2M5 522h2M1015 522h1M3 523h2M84 523h1M402 523h1M1016 523h1M85 524h1M401 524h1M1017 524h1M1018 525h1M1019 526h1M87 527h1M1020 527h1M1021 528h1M1022 529h1M1023 530h1M1024 531h1M1025 532h1M335 545h2M337 546h1M338 547h1M339 548h2M291 549h1M809 551h4M289 552h1M808 552h1M813 552h3M237 553h1M807 553h1M493 554h1M805 554h2M111 555h1M287 555h1M494 555h2M804 555h1M995 555h1M110 556h1M286 556h1M496 556h1M803 556h1M993 556h2M497 557h1M991 557h2M113 558h1M498 558h2M925 558h2M990 558h1M108 559h1M114 559h1M281 559h4M927 559h2M107 560h1M241 560h1M270 560h11M929 560h2M116 562h1M105 563h1M27 566h1M688 566h2M28 567h1M690 567h2M38 568h1M692 568h2M37 569h1M30 570h1M35 570h2M1040 570h2M34 571h1M1042 571h1M33 572h1M1043 572h1M32 573h1M248 573h2M910 573h1M1044 573h2M250 574h4M911 574h2M981 574h1M1046 574h1M254 575h3M794 575h1M913 575h2M979 575h2M257 576h2M793 576h1M908 576h1M915 576h2M976 576h3M259 577h2M792 577h1M975 577h1M261 578h1M791 578h1M790 579h1M906 579h1M789 580h1M788 581h1M307 582h1M787 582h1M904 582h1M308 583h1M786 583h1M723 584h8M721 585h2M731 585h1M902 585h1M310 586h1M719 586h2M732 586h1M784 586h1M900 586h2M717 587h2M733 587h1M783 587h1M898 587h2M715 588h2M734 588h1M896 588h2M312 589h1M703 589h1M714 589h1M735 589h1M894 589h2M357 590h1M704 590h1M713 590h1M736 590h1M781 590h1M835 590h3M892 590h2M358 591h1M737 591h1M780 591h1M831 591h4M890 591h2M359 592h1M882 592h8M706 593h1M711 593h1M710 594h1M361 595h1M709 595h1M362 596h1M708 596h1M740 596h1M744 603h8M752 604h2M773 604h1M754 605h2M772 605h1M756 606h2M758 607h2M760 608h1M770 608h1M761 609h1M769 609h1M762 610h2M764 611h1M371 612h6M765 612h1M767 612h1M766 613h1" transform="translate(0 .5)" stroke="#00ff00" stroke-width="1" fill="none"/>
<path d="M10 520v2M11 522v3M12 525v3M13 528v3M14 531v4M15 535v3M16 538v3M17 541v3M18 544v2M19 546v3M20 549v3M21 552v2M22 554v3M23 557v3M24 560v2M25 562v2M26 564v2M29 568v2M31 571v2M39 566v2M40 564v2M41 561v3M42 559v2M43 557v2M44 554v3M45 552v2M46 548v4M47 544v4M48 540v4M49 536v4M50 532v4M51 528v4M52 524v4M53 521v3M62 512v2M63 510v2M65 507v2M66 505v2M67 503v2M69 500v2M70 498v2M72 495v2M73 493v2M74 491v2M75 490v3M76 493v4M77 497v4M78 501v4M79 505v5M80 510v4M81 514v4M82 518v3M83 521v2M86 525v2M88 528v2M89 530v2M90 532v2M91 534v3M92 537v2M93 539v3M94 542v2M95 544v3M96 547v2M97 549v2M98 551v2M99 553v2M100 555v2M101 557v2M102 559v2M103 561v2M104 563v2M106 561v2M109 557v2M112 556v2M115 560v2M117 563v2M118 564v2M119 562v2M120 560v2M121 558v2M122 556v2M123 554v2M124 552v2M125 549v3M126 547v2M127 544v3M128 541v3M129 539v2M130 536v3M131 533v3M132 531v2M133 528v3M134 526v2M135 524v2M136 522v2M137 520v2M138 518v2M139 516v2M140 513v3M141 511v2M142 508v3M143 506v2M144 503v3M145 500v3M146 498v2M147 495v3M148 493v2M149 490v3M150 488v2M151 486v2M152 483v3M153 481v2M154 479v2M158 474v2M162 469v2M163 467v2M165 464v2M167 461v2M168 459v2M170 456v2M171 454v2M172 452v2M173 450v2M174 448v2M175 446v2M177 443v2M179 440v2M180 438v2M182 435v2M184 432v2M185 430v2M186 428v2M187 426v2M188 424v2M189 422v2M190 420v2M192 417v2M195 413v2M197 411v3M198 414v4M199 418v4M200 422v4M201 426v5M202 431v4M203 435v4M204 439v4M205 443v6M206 449v7M207 456v8M208 464v7M209 471v7M210 478v8M211 486v7M212 493v4M213 497v2M214 499v2M215 501v2M216 503v2M217 505v2M218 507v2M219 509v2M220 511v2M221 513v2M222 515v2M223 517v2M224 519v2M225 521v2M226 523v2M227 525v3M228 528v4M229 532v3M230 535v3M231 538v4M232 542v3M233 545v2M234 547v2M235 549v2M236 551v2M238 554v2M239 556v2M240 558v2M242 561v2M243 563v2M244 565v2M245 567v2M246 569v2M247 571v2M262 577v2M263 575v2M264 572v3M265 570v2M266 567v3M267 564v3M268 562v2M269 560v2M285 557v2M288 553v2M290 550v2M292 550v2M293 552v2M294 554v2M295 556v2M296 558v2M297 560v2M298 562v2M299 564v2M300 566v3M301 569v2M302 571v2M303 573v3M304 576v2M305 578v2M306 580v2M309 584v2M311 587v2M313 587v2M314 585v2M315 583v2M316 581v2M317 579v2M318 577v2M319 575v2M320 573v2M321 571v2M322 569v2M323 567v2M324 565v2M325 563v2M326 561v2M327 558v3M328 556v2M329 554v2M330 552v2M331 550v2M332 548v2M333 546v2M334 544v2M341 549v2M342 551v3M343 554v3M344 557v2M345 559v3M346 562v3M347 565v3M348 568v3M349 571v2M350 573v3M351 576v2M352 578v3M353 581v2M354 583v3M355 586v2M356 588v2M360 593v2M363 597v2M364 599v2M365 601v2M366 603v2M367 605v2M368 607v2M369 609v2M370 611v2M377 610v3M378 606v4M379 602v4M380 598v4M381 594v4M382 590v4M383 586v4M384 582v4M385 579v3M386 575v4M387 572v3M388 569v3M389 566v3M390 562v4M391 559v3M392 555v4M393 551v4M394 547v4M395 543v4M396 538v5M397 534v4M398 530v4M399 527v3M400 525v2M403 521v2M405 518v2M407 515v2M408 513v2M409 511v2M410 509v2M411 507v2M412 505v2M413 503v2M414 499v4M415 495v4M416 491v4M417 487v4M418 483v4M419 479v4M420 477v2M421 475v2M422 473v2M423 471v2M425 468v2M426 466v2M427 464v2M429 461v2M431 458v2M432 456v2M434 453v2M464 454v2M465 456v3M466 459v2M467 461v3M468 464v3M469 467v2M470 469v3M471 472v3M472 475v3M473 478v3M474 481v3M475 484v4M476 488v3M477 491v3M478 494v4M479 498v4M480 502v4M481 506v4M482 510v4M483 514v4M484 518v4M485 522v5M486 527v4M487 531v4M488 535v4M489 539v4M490 543v4M491 547v4M492 551v3M500 556v4M501 550v6M502 543v7M503 537v6M504 530v7M505 523v7M506 517v6M507 513v4M508 515v2M509 517v3M510 520v2M511 522v2M512 524v3M513 527v2M514 529v2M515 526v3M516 523v3M517 520v3M518 516v4M519 513v3M520 510v3M521 508v2M522 506v2M525 502v2M527 499v2M528 497v2M529 495v2M530 493v2M531 491v2M532 489v2M533 487v2M534 485v2M535 483v2M536 481v2M557 486v3M558 481v5M559 477v4M560 472v5M561 467v5M562 463v4M563 458v5M564 455v3M565 453v2M568 449v2M570 446v2M572 443v2M575 439v2M578 435v2M587 442v2M588 444v2M589 446v2M590 448v2M591 450v2M592 452v2M607 455v2M608 457v2M609 459v2M610 461v3M611 464v2M612 466v3M613 469v2M614 471v2M615 472v3M616 468v4M617 463v5M618 459v4M619 455v4M620 450v5M621 446v4M622 442v4M623 440v2M624 438v2M625 436v2M626 433v3M627 431v2M628 429v2M629 427v2M630 425v2M631 423v2M632 421v2M633 419v2M634 417v2M635 415v2M638 411v2M641 407v2M643 405v2M644 407v2M645 409v2M646 411v2M647 413v2M648 415v2M649 417v2M650 419v2M651 421v3M652 424v3M653 427v4M654 431v3M655 434v3M656 437v4M657 441v3M658 444v4M659 448v5M660 453v6M661 459v5M662 464v5M663 469v6M664 475v5M665 480v4M666 484v4M667 488v3M668 491v3M669 494v4M670 498v3M671 501v4M672 505v4M673 509v4M674 513v5M675 518v4M676 522v5M677 527v5M678 532v4M679 536v4M680 540v4M681 544v3M682 547v3M683 550v4M684 554v3M685 557v3M686 560v4M687 564v2M694 569v2M695 571v2M696 573v3M697 576v2M698 578v2M699 580v3M700 583v2M701 585v2M702 587v2M705 591v2M707 594v2M712 591v2M738 592v2M739 594v2M741 597v2M742 599v2M743 601v2M768 610v2M771 606v2M774 602v2M775 600v2M776 598v2M777 596v2M778 594v2M779 592v2M782 588v2M785 584v2M795 573v2M796 571v2M797 568v3M798 566v2M799 564v2M800 561v3M801 559v2M802 557v2M816 552v2M817 554v3M818 557v2M819 559v3M820 562v3M821 565v2M822 567v3M823 570v3M824 573v3M825 576v3M826 579v2M827 581v3M828 584v3M829 587v3M830 590v2M838 587v4M839 579v8M840 572v7M841 564v8M842 556v8M843 549v7M844 541v8M845 537v4M846 535v2M847 533v2M848 531v2M849 529v2M850 527v2M851 525v2M852 523v2M853 521v2M855 518v2M856 516v2M858 513v2M859 512v2M860 514v4M861 518v3M862 521v3M863 524v4M864 528v3M865 531v4M866 535v3M867 538v4M868 542v4M869 546v4M870 550v3M871 553v4M872 557v4M873 561v4M874 565v3M875 568v4M876 572v4M877 576v3M878 579v4M879 583v4M880 587v4M881 591v2M903 583v2M905 580v2M907 577v2M909 574v2M917 576v2M918 573v3M919 570v3M920 568v2M921 565v3M922 562v3M923 559v3M924 557v2M931 559v3M932 555v4M933 550v5M934 546v4M935 541v5M936 536v5M937 532v4M938 528v4M939 526v2M940 524v2M941 522v2M942 519v3M943 517v2M944 515v2M945 513v2M946 510v3M947 507v3M948 504v3M949 502v2M950 499v3M951 496v3M952 493v3M953 491v2M954 493v2M955 495v2M956 497v2M957 499v2M958 501v2M959 503v2M960 505v4M961 509v6M962 515v5M963 520v6M964 526v6M965 532v5M966 537v6M967 543v5M968 548v4M969 552v5M970 557v4M971 561v5M972 566v5M973 571v4M974 575v3M982 573v2M983 571v2M984 569v2M985 567v2M986 564v3M987 562v2M988 560v2M989 558v2M996 554v2M997 550v4M998 547v3M999 543v4M1000 539v4M1001 536v3M1002 532v4M1003 530v2M1004 528v2M1005 526v2M1006 524v2M1007 522v2M1008 520v2M1009 518v2M1010 516v2M1014 520v2M1026 533v2M1027 535v2M1028 537v2M1029 539v2M1030 541v2M1031 543v2M1032 545v3M1033 548v3M1034 551v4M1035 555v3M1036 558v3M1037 561v4M1038 565v3M1039 568v2" transform="translate(.5 0)" stroke="#00ff00" stroke-width="1" fill="none"/>
<rect x="3" y="552" width="1044" height="1" fill="#c8c8c8"/>
<rect x="3" y="589" width="1044" height="1" fill="#0000ff"/>
<polyline points="3.0,626.0 974.5,626.0 982.5,459.6 989.5,459.6 996.5,626.0 1046.5,626.0" fill="none" stroke="#ffff00" stroke-width="2" stroke-linejoin="bevel"/>
<rect x="976" y="625" width="2" height="2" fill="#ff0000"/>
<rect x="0" y="630" width="978" height="1" fill="#b00000"/>
<rect x="0" y="646" width="978" height="1" fill="#b00000"/>
<rect x="103" y="630" width="1" height="17" fill="#b00000"/>
<rect x="262" y="630" width="1" height="17" fill="#b00000"/>
<rect x="383" y="630" width="1" height="17" fill="#b00000"/>
<rect x="527" y="630" width="1" height="17" fill="#b00000"/>
<rect x="621" y="630" width="1" height="17" fill="#b00000"/>
<rect x="865" y="630" width="1" height="17" fill="#b00000"/>
<rect x="143" y="631" width="1" height="3" fill="#b00000"/>
<rect x="182" y="631" width="1" height="3" fill="#b00000"/>
<rect x="222" y="631" width="1" height="3" fill="#b00000"/>
<rect x="292" y="631" width="1" height="3" fill="#b00000"/>
<rect x="323" y="631" width="1" height="3" fill="#b00000"/>
<rect x="354" y="631" width="1" height="3" fill="#b00000"/>
<rect x="420" y="631" width="1" height="3" fill="#b00000"/>
<rect x="455" y="631" width="1" height="3" fill="#b00000"/>
<rect x="491" y="631" width="1" height="3" fill="#b00000"/>
<rect x="551" y="631" width="1" height="3" fill="#b00000"/>
<rect x="575" y="631" width="1" height="3" fill="#b00000"/>
<rect x="598" y="631" width="1" height="3" fill="#b00000"/>
<rect x="657" y="631" width="1" height="3" fill="#b00000"/>
<rect x="693" y="631" width="1" height="3" fill="#b00000"/>
<rect x="815" y="631" width="1" height="3" fill="#b00000"/>
<rect x="841" y="631" width="1" height="3" fill="#b00000"/>
<rect x="905" y="631" width="1" height="3" fill="#b00000"/>
<rect x="945" y="631" width="1" height="3" fill="#b00000"/>
<rect x="715" y="632" width="78" height="14" fill="#000090"/>
<rect x="0" y="647" width="1" height="3" fill="#b00000"/>
<rect x="42" y="647" width="1" height="3" fill="#b00000"/>
<rect x="73" y="647" width="1" height="3" fill="#b00000"/>
<rect x="115" y="647" width="1" height="3" fill="#b00000"/>
<rect x="145" y="647" width="1" height="3" fill="#b00000"/>
<rect x="177" y="647" width="1" height="3" fill="#b00000"/>
<rect x="207" y="647" width="1" height="3" fill="#b00000"/>
<rect x="241" y="647" width="1" height="3" fill="#b00000"/>
<rect x="282" y="647" width="1" height="3" fill="#b00000"/>
<rect x="308" y="647" width="1" height="3" fill="#b00000"/>
<rect x="333" y="647" width="1" height="3" fill="#b00000"/>
<rect x="365" y="647" width="1" height="3" fill="#b00000"/>
<rect x="390" y="647" width="1" height="3" fill="#b00000"/>
<rect x="422" y="647" width="1" height="3" fill="#b00000"/>
<rect x="481" y="647" width="1" height="3" fill="#b00000"/>
<rect x="509" y="647" width="1" height="3" fill="#b00000"/>
<rect x="536" y="647" width="1" height="3" fill="#b00000"/>
<rect x="569" y="647" width="1" height="3" fill="#b00000"/>
<rect x="599" y="647" width="1" height="3" fill="#b00000"/>
<rect x="629" y="647" width="1" height="3" fill="#b00000"/>
<rect x="663" y="647" width="1" height="3" fill="#b00000"/>
<rect x="697" y="647" width="1" height="3" fill="#b00000"/>
<rect x="735" y="647" width="1" height="3" fill="#b00000"/>
<rect x="766" y="647" width="1" height="3" fill="#b00000"/>
<rect x="808" y="647" width="1" height="3" fill="#b00000"/>
<rect x="839" y="647" width="1" height="3" fill="#b00000"/>
<rect x="871" y="647" width="1" height="3" fill="#b00000"/>
<rect x="1124" y="25" width="6" height="1" fill="#b00000"/>
<rect x="1124" y="45" width="6" height="1" fill="#b00000"/>
<rect x="1124" y="141" width="6" height="1" fill="#b00000"/>
<rect x="1124" y="239" width="6" height="1" fill="#b00000"/>
<rect x="1124" y="336" width="6" height="1" fill="#b00000"/>
<rect x="1124" y="397" width="6" height="1" fill="#b00000"/>
<rect x="1124" y="418" width="6" height="1" fill="#b00000"/>
<rect x="1124" y="437" width="6" height="1" fill="#b00000"/>
<rect x="978" y="600" width="152" height="50" fill="#000"/>
<g shape-rendering="auto"><circle cx="95" cy="29.5" r="6" fill="#808080"/><path d="M92 28.5 L95 31.5 L98 28.5" stroke="#181818" stroke-width="1.2" fill="none"/></g>
<g shape-rendering="auto"><circle cx="8" cy="394.5" r="6" fill="#808080"/><path d="M5 393.5 L8 396.5 L11 393.5" stroke="#181818" stroke-width="1.2" fill="none"/></g>
</svg>
<div class="t" style="left:28px;top:2px;color:#c8c8c8;">分时</div>
<div class="t" style="left:61px;top:2px;color:#c8c8c8;">1分钟</div>
<div class="t" style="left:100px;top:2px;color:#c8c8c8;">5分钟</div>
<div class="t" style="left:139px;top:2px;color:#c8c8c8;">15分钟</div>
<div class="t" style="left:185px;top:2px;color:#c8c8c8;">30分钟</div>
<div class="t" style="left:231px;top:2px;color:#c8c8c8;">60分钟</div>
<div class="t" style="left:278px;top:2px;color:#40ffff;">日线</div>
<div class="t" style="left:312px;top:2px;color:#c8c8c8;">周线</div>
<div class="t" style="left:345px;top:2px;color:#c8c8c8;">月线</div>
<div class="t" style="left:378px;top:2px;color:#c8c8c8;">多周期</div>
<div class="t" style="left:422px;top:2px;color:#c8c8c8;">更多</div>
<div class="t" style="left:450px;top:2px;color:#c8c8c8;">&gt;</div>
<div class="t" style="left:813px;top:2px;color:#c8c8c8;">复权</div>
<div class="t" style="left:847px;top:2px;color:#c8c8c8;">叠加</div>
<div class="t" style="left:882px;top:2px;color:#c8c8c8;">多股</div>
<div class="t" style="left:917px;top:2px;color:#c8c8c8;">统计</div>
<div class="t" style="left:952px;top:2px;color:#c8c8c8;">画线</div>
<div class="t" style="left:989px;top:2px;color:#c8c8c8;">F10</div>
<div class="t" style="left:1022px;top:2px;color:#c8c8c8;">标记</div>
<div class="t" style="left:1054.5px;top:2px;color:#c8c8c8;">+自选</div>
<div class="t" style="left:1093px;top:2px;color:#c8c8c8;">返回</div>
<div class="t" style="left:2.5px;top:22px;color:#c8c8c8;">美克家居</div>
<div class="t" style="left:52px;top:22px;color:#c8c8c8;">(日线)</div>
<div class="t r" style="right:13px;top:44px;color:#ff3232">4.20</div>
<div class="t r" style="right:13px;top:72px;color:#ff3232">4.00</div>
<div class="t r" style="right:13px;top:100px;color:#ff3232">3.80</div>
<div class="t r" style="right:13px;top:128px;color:#ff3232">3.60</div>
<div class="t r" style="right:13px;top:156px;color:#ff3232">3.40</div>
<div class="t r" style="right:13px;top:185px;color:#ff3232">3.20</div>
<div class="t r" style="right:13px;top:213px;color:#ff3232">3.00</div>
<div class="t r" style="right:13px;top:241px;color:#ff3232">2.80</div>
<div class="t r" style="right:13px;top:269px;color:#ff3232">2.60</div>
<div class="t r" style="right:13px;top:297px;color:#ff3232">2.40</div>
<div class="t r" style="right:13px;top:325px;color:#ff3232">2.20</div>
<div class="t r" style="right:13px;top:353px;color:#ff3232">2.00</div>
<div class="t r" style="right:13px;top:399px;color:#ff3232">120.0</div>
<div class="t r" style="right:13px;top:436px;color:#ff3232">100.0</div>
<div class="t r" style="right:13px;top:509px;color:#ff3232">60.00</div>
<div class="t r" style="right:13px;top:546px;color:#ff3232">40.00</div>
<div class="t r" style="right:13px;top:583px;color:#ff3232">20.00</div>
<div class="t" style="left:1074px;top:471px;color:#d0d0d0;text-shadow:none">76.06</div>
<div class="t" style="left:104px;top:361px;color:#c8c8c8;font-size:11px">1.95</div>
<div class="t" style="left:657.5px;top:39.5px;color:#d8d8d8;font-size:11px">4.27</div>
<div class="t" style="left:370.5px;top:370px;color:#ffffff;">财</div>
<div class="t" style="left:608.5px;top:370px;color:#ffffff;">停</div>
<div class="t" style="left:672.5px;top:370px;color:#ffffff;">跌</div>
<div class="t" style="left:753.5px;top:370px;color:#ffffff;">预</div>
<div class="t" style="left:838.5px;top:370px;color:#ffffff;">涨</div>
<div class="t" style="left:850.5px;top:370px;color:#ffffff;">榜</div>
<div class="t" style="left:18px;top:387px;color:#c8c8c8;">股朋指标网</div>
<div class="t" style="left:82.5px;top:387px;color:#c8c8c8;">浮动筹码: 9.32</div>
<div class="t" style="left:166px;top:387px;color:#ffff00;">浮动筹码1: 5.77</div>
<div class="t" style="left:255.5px;top:387px;color:#ff00ff;">浮动筹码2: 3.56</div>
<div class="t" style="left:346px;top:387px;color:#00f400;">获利筹码: 28.19</div>
<div class="t" style="left:436.5px;top:387px;color:#c8c8c8;">: 40.00</div>
<div class="t" style="left:479px;top:387px;color:#0000ff;">: 20.00</div>
<div class="t" style="left:521px;top:387px;color:#ffffff;">: 0.00</div>
<div class="t" style="left:555px;top:387px;color:#ff0000;">英雄: 0.00</div>
<div class="t" style="left:614px;top:387px;color:#ffff00;">绝地反击: 0.00</div>
<div class="t" style="left:3.5px;top:633px;color:#ff3232;">2025年</div>
<div class="t" style="left:105px;top:633px;color:#ff3232;">9</div>
<div class="t" style="left:264px;top:633px;color:#ff3232;">10</div>
<div class="t" style="left:385.5px;top:633px;color:#ff3232;">11</div>
<div class="t" style="left:529.5px;top:633px;color:#ff3232;">12</div>
<div class="t" style="left:623.5px;top:633px;color:#ff3232;">1</div>
<div class="t" style="left:868px;top:633px;color:#ff3232;">3</div>
<div class="t" style="left:716px;top:633px;color:#e8e8e8;">2026/01/22/四</div>
<div class="t" style="left:998.5px;top:607.5px;color:#fff;font:900 19px/24px 'Liberation Serif','Noto Serif CJK SC',serif;letter-spacing:2px;height:24px">乐淘公式网</div>
<div class="t" style="left:1000.5px;top:630px;color:#fff;font:bold 15px/18px 'Liberation Serif',serif;">www.60lt.com</div>
<div class="t" style="left:1125px;top:27px;color:#c8c8c8;">美</div>
<div class="t" style="left:1125px;top:50.0px;color:#d0d0d0;">卖</div>
<div class="t" style="left:1125px;top:69.5px;color:#d0d0d0;">卖</div>
<div class="t" style="left:1125px;top:88.8px;color:#d0d0d0;">卖</div>
<div class="t" style="left:1125px;top:108.2px;color:#d0d0d0;">卖</div>
<div class="t" style="left:1125px;top:127.5px;color:#d0d0d0;">卖</div>
<div class="t" style="left:1125px;top:147.5px;color:#d0d0d0;">买</div>
<div class="t" style="left:1125px;top:166.9px;color:#d0d0d0;">买</div>
<div class="t" style="left:1125px;top:186.3px;color:#d0d0d0;">买</div>
<div class="t" style="left:1125px;top:205.7px;color:#d0d0d0;">买</div>
<div class="t" style="left:1125px;top:225.1px;color:#d0d0d0;">买</div>
<div class="t" style="left:1125px;top:245.0px;color:#d0d0d0;">现</div>
<div class="t" style="left:1125px;top:264.5px;color:#d0d0d0;">涨</div>
<div class="t" style="left:1125px;top:283.8px;color:#d0d0d0;">涨</div>
<div class="t" style="left:1125px;top:303.2px;color:#d0d0d0;">总</div>
<div class="t" style="left:1125px;top:322.5px;color:#d0d0d0;">外</div>
<div class="t" style="left:1125px;top:342.5px;color:#d0d0d0;">换</div>
<div class="t" style="left:1125px;top:362.5px;color:#d0d0d0;">净</div>
<div class="t" style="left:1125px;top:381.5px;color:#d0d0d0;">收</div>
<div class="t" style="left:1125px;top:401px;color:#ffff00;">日</div>
<div class="t" style="left:1125px;top:421px;color:#ffffff;">分</div>
<div class="t" style="left:1125px;top:442px;color:#ffffff;font-weight:bold;">1</div>
<div class="t" style="left:1125px;top:458.5px;color:#ffffff;font-weight:bold;">1</div>
<div class="t" style="left:1125px;top:475.0px;color:#ffffff;font-weight:bold;">1</div>
<div class="t" style="left:1125px;top:491.5px;color:#ffffff;font-weight:bold;">1</div>
<div class="t" style="left:1125px;top:508.0px;color:#ffffff;font-weight:bold;">1</div>
<div class="t" style="left:1125px;top:524.5px;color:#ffffff;font-weight:bold;">1</div>
<div class="t" style="left:1125px;top:541.0px;color:#ffffff;font-weight:bold;">1</div>
<div class="t" style="left:1125px;top:557.5px;color:#ffffff;font-weight:bold;">1</div>
<div class="t" style="left:1125px;top:574.0px;color:#ffffff;font-weight:bold;">1</div>
<div class="t" style="left:1125px;top:590.5px;color:#ffffff;font-weight:bold;">1</div>
<div class="t" style="left:7px;top:648px;color:#c8c8c8;">指标</div>
<div class="t" style="left:49px;top:648px;color:#c8c8c8;">模</div>
<div class="t" style="left:823px;top:648px;color:#c8c8c8;">上</div>
<div class="t" style="left:844px;top:648px;color:#00ffff;">扩展</div>
</div></body></html>
